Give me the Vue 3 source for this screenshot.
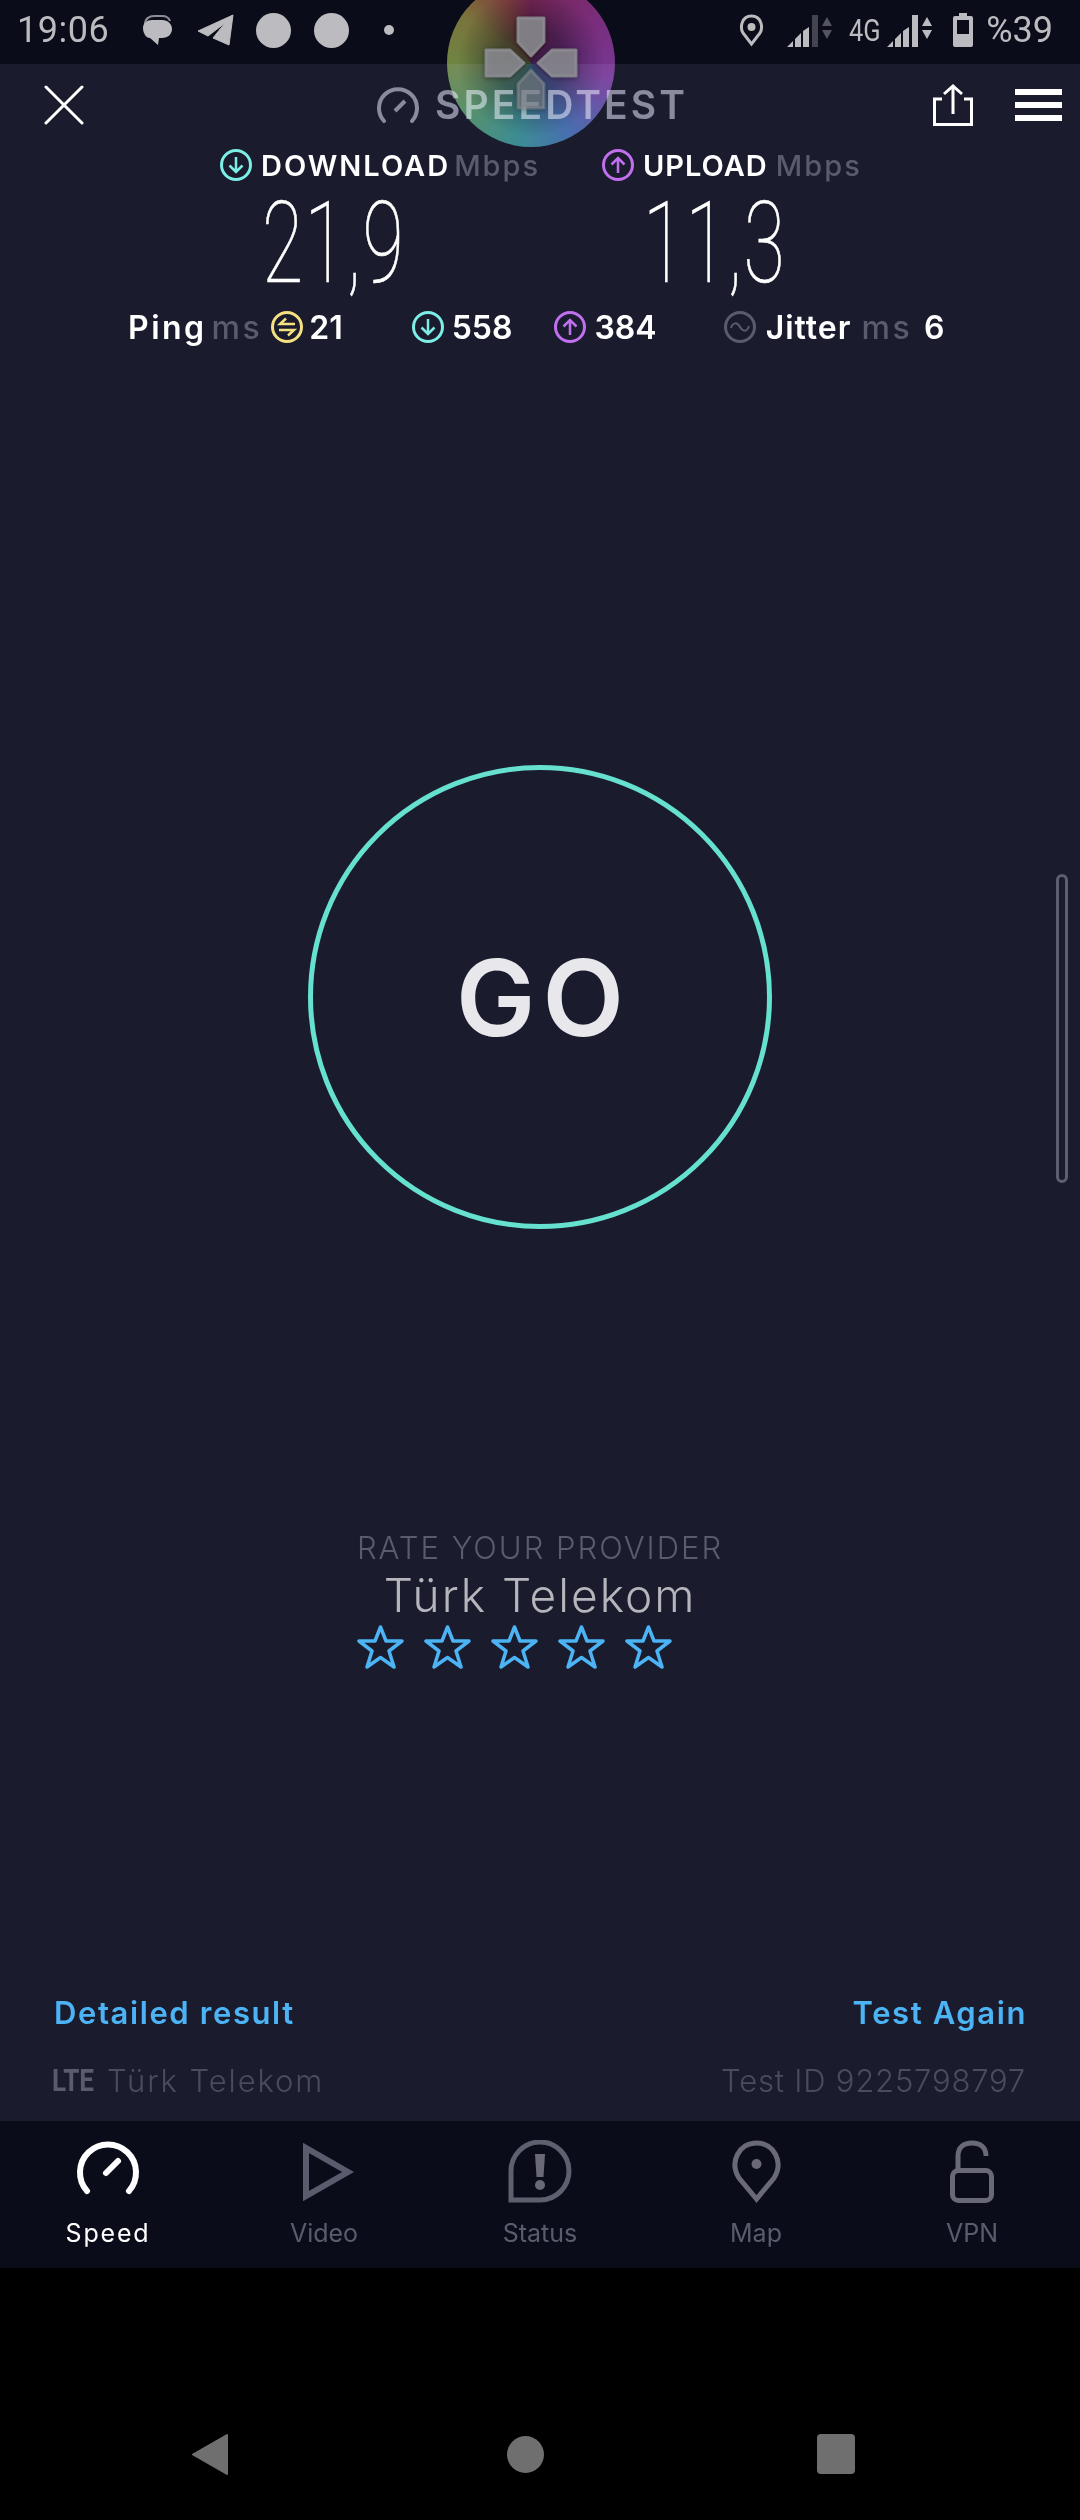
<script setup>
const stars = [1, 2, 3, 4, 5]
const tabs = [
  { key: 'speed', label: 'Speed', active: true },
  { key: 'video', label: 'Video' },
  { key: 'status', label: 'Status' },
  { key: 'map', label: 'Map' },
  { key: 'vpn', label: 'VPN' }
]
</script>

<template>
  <div class="phone">
    <header class="status-bar">
      <span class="clock">19:06</span>
      <svg class="st-bubble" width="32" height="31" viewBox="0 0 32 31">
        <path d="M4 9C4 4 8 1 13 1h8c4 0 7 2 8 5" fill="none" stroke="#8d8d93" stroke-width="2" />
        <path d="M2 13C2 8 6 5 11 5h10c6 0 10 4 10 9s-4 9-10 9h-3l-1 7-8-7C5 23 2 18 2 13z" fill="#bcbcc0" />
      </svg>
      <svg class="st-plane" width="37" height="32" viewBox="0 0 37 32">
        <path d="M36 1 32 31 16 24l12-15-17 13L1 17z" fill="#bcbcc0" stroke="#bcbcc0" stroke-width="1" stroke-linejoin="round" />
      </svg>
      <span class="st-circle first"></span>
      <span class="st-circle"></span>
      <span class="st-dot"></span>
      <div class="status-right">
        <svg width="25" height="33" viewBox="0 0 25 33">
          <path d="M12.5 30 4 19C1 14 2 2 12.5 2S24 14 21 19z" fill="none" stroke="#bcbcc0" stroke-width="3" />
          <circle cx="12.5" cy="13" r="4" fill="#bcbcc0" />
        </svg>
        <svg class="st-signal" width="45" height="33" viewBox="0 0 45 33">
          <path d="M0 33 6 27v6zM8 25l6-6v14H8zM16 17l6-4v20h-6z" fill="#bcbcc0" />
          <path d="M25 1h6v32h-6z" fill="#43444f" />
          <path d="M40 3l-5 9h10zM35 16l5 9 5-9z" fill="#53545e" />
        </svg>
        <span class="st-4g">4G</span>
        <svg class="st-signal-two" width="45" height="33" viewBox="0 0 45 33">
          <path d="M0 33 6 27v6zM8 25l6-6v14H8zM16 17l6-4v20h-6zM25 1h6v32h-6z" fill="#bcbcc0" />
          <path d="M40 3l-5 9h10zM35 16l5 9 5-9z" fill="#bcbcc0" />
        </svg>
        <svg class="st-battery" width="20" height="34" viewBox="0 0 20 34">
          <path fill-rule="evenodd" d="M6 0h8v3h4a2 2 0 0 1 2 2v27a2 2 0 0 1-2 2H2a2 2 0 0 1-2-2V5a2 2 0 0 1 2-2h4zM4 7v14h12V7z" fill="#bcbcc0" />
        </svg>
        <span class="battery-text">%39</span>
      </div>
    </header>

    <main class="app">
      <div class="top-bar">
        <svg class="close" width="40" height="40" viewBox="0 0 40 40">
          <path d="M2 2 38 38M38 2 2 38" stroke="#fff" stroke-width="3" stroke-linecap="round" />
        </svg>
        <div class="logo">
          <svg width="42" height="36" viewBox="0 0 42 36">
            <path d="M7 34A19 19 0 1 1 35 34" fill="none" stroke="#8a8b9e" stroke-width="4" stroke-linecap="round" />
            <path d="M18 24 28 14" stroke="#8a8b9e" stroke-width="4" />
          </svg>
          <span>SPEEDTEST</span>
        </div>
        <div class="top-actions">
          <svg width="40" height="42" viewBox="0 0 40 42">
            <path d="M9 15H1.500V40.500H38.500V15H31M20 30V2M11 10 20 2 29 10" fill="none" stroke="#fff" stroke-width="3" />
          </svg>
          <div class="menu"><i></i><i></i><i></i></div>
        </div>
      </div>

      <section class="speeds">
        <div class="speed-col">
          <div class="speed-head">
            <svg width="32" height="32" viewBox="0 0 32 32" class="dl">
              <circle cx="16" cy="16" r="14.500" fill="none" stroke="currentColor" stroke-width="3" />
              <path d="M16 8V23M9.500 16.500 16 23 22.500 16.500" fill="none" stroke="currentColor" stroke-width="2.500" />
            </svg>
            <b>DOWNLOAD</b><em>Mbps</em>
          </div>
          <div class="speed-value first">21,9</div>
        </div>
        <div class="speed-col">
          <div class="speed-head">
            <svg width="32" height="32" viewBox="0 0 32 32" class="ul">
              <circle cx="16" cy="16" r="14.500" fill="none" stroke="currentColor" stroke-width="3" />
              <path d="M16 24V9M9.500 15.500 16 9 22.500 15.500" fill="none" stroke="currentColor" stroke-width="2.500" />
            </svg>
            <b class="upload-label">UPLOAD</b><em class="upload-unit">Mbps</em>
          </div>
          <div class="speed-value">11,3</div>
        </div>
      </section>

      <section class="stats">
        <div class="stat ping">
          <b class="word">Ping</b><em>ms</em>
          <svg width="32" height="32" viewBox="0 0 32 32" class="yl">
            <circle cx="16" cy="16" r="14.500" fill="none" stroke="currentColor" stroke-width="3" />
            <path d="M24 13H9L15 7.500M8 19H23L17 24.500" fill="none" stroke="currentColor" stroke-width="2.500" />
          </svg>
          <b>21</b>
        </div>
        <div class="stat down">
          <svg width="32" height="32" viewBox="0 0 32 32" class="dl">
            <circle cx="16" cy="16" r="14.500" fill="none" stroke="currentColor" stroke-width="3" />
            <path d="M16 8V23M9.500 16.500 16 23 22.500 16.500" fill="none" stroke="currentColor" stroke-width="2.500" />
          </svg>
          <b>558</b>
        </div>
        <div class="stat up">
          <svg width="32" height="32" viewBox="0 0 32 32" class="ul">
            <circle cx="16" cy="16" r="14.500" fill="none" stroke="currentColor" stroke-width="3" />
            <path d="M16 24V9M9.500 15.500 16 9 22.500 15.500" fill="none" stroke="currentColor" stroke-width="2.500" />
          </svg>
          <b>384</b>
        </div>
        <div class="stat jitter">
          <svg width="32" height="32" viewBox="0 0 32 32" class="jt">
            <circle cx="16" cy="16" r="14.500" fill="none" stroke="currentColor" stroke-width="3" />
            <path d="M7 17C9 11 13 11 16 16S23 21 25 15" fill="none" stroke="currentColor" stroke-width="2" />
          </svg>
          <b class="word-tight">Jitter</b><em>ms</em><b class="jitter-num">6</b>
        </div>
      </section>

      <button class="go"><span>GO</span></button>

      <section class="rate">
        <div class="rate-label">RATE YOUR PROVIDER</div>
        <div class="rate-name">Türk Telekom</div>
        <div class="rate-stars">
          <svg v-for="s in stars" :key="s" width="47" height="44" viewBox="0 0 47 44">
            <path d="M23.500 2 29 16H45L32 26 37 42 23.500 32.500 10 42 15 26 2 16H18z" fill="none" stroke="#4cb4f5" stroke-width="3.500" stroke-linejoin="round" />
          </svg>
        </div>
      </section>

      <div class="links">
        <span>Detailed result</span>
        <span>Test Again</span>
      </div>
      <div class="meta">
        <div class="carrier"><span class="lte">LTE</span><span class="carrier-name">Türk Telekom</span></div>
        <span class="test-id">Test ID 9225798797</span>
      </div>

      <div class="scroll-thumb"></div>
    </main>

    <nav class="tabs">
      <div v-for="tab in tabs" :key="tab.key" class="tab" :class="{ active: tab.active }">
        <div class="tab-icon">
          <svg v-if="tab.key === 'speed'" width="64" height="56" viewBox="0 0 64 56">
            <path d="M11 51A28 28 0 1 1 53 51" fill="none" stroke="#fff" stroke-width="6" stroke-linecap="round" />
            <path d="M30 33 42 21" stroke="#fff" stroke-width="6" stroke-linecap="round" />
          </svg>
          <svg v-if="tab.key === 'video'" class="video-icon" width="52" height="60" viewBox="0 0 52 60">
            <path d="M3 6V54L45 30z" fill="none" stroke="#5a5c6e" stroke-width="6" />
          </svg>
          <svg v-if="tab.key === 'status'" width="64" height="63" viewBox="0 0 64 63">
            <path d="M3 60V32A29 29 0 1 1 32 60z" fill="none" stroke="#5e6070" stroke-width="5" />
            <path d="M27 14H37L35.500 37H28.500z" fill="#696a75" />
            <circle cx="32" cy="45" r="5" fill="#696a75" />
          </svg>
          <svg v-if="tab.key === 'map'" width="49" height="63" viewBox="0 0 49 63">
            <path d="M24.500 59 7 38C-3 22 7 3 24.500 3S52 22 42 38z" fill="none" stroke="#696a75" stroke-width="5" />
            <circle cx="24.500" cy="24" r="5" fill="#696a75" />
          </svg>
          <svg v-if="tab.key === 'vpn'" width="44" height="63" viewBox="0 0 44 63">
            <path d="M8 30V16C8 7 14 3 22 3S36 7 36 16" fill="none" stroke="#696a75" stroke-width="5" />
            <rect x="2.500" y="30.500" width="39" height="30" rx="6" fill="none" stroke="#696a75" stroke-width="5" />
          </svg>
        </div>
        <span class="tab-label">{{ tab.label }}</span>
      </div>
    </nav>

    <footer class="system-nav">
      <svg width="38" height="43" viewBox="0 0 38 43">
        <path d="M36 2 2 21.500 36 41z" fill="#6f6f6f" stroke="#6f6f6f" stroke-width="2" stroke-linejoin="round" />
      </svg>
      <span class="nav-home"></span>
      <span class="nav-recent"></span>
    </footer>

    <div class="float-ball"></div>
    <svg class="float-pad" width="96" height="96" viewBox="0 0 96 96">
      <g fill="#8c8c92" fill-opacity=".88" stroke="#8c8c92" stroke-opacity=".88" stroke-width="3" stroke-linejoin="round">
        <path d="M35 3H61V27L48 41 35 27z" />
        <path d="M35 93H61V69L48 55 35 69z" fill-opacity=".55" stroke-opacity=".55" />
        <path d="M3 35V61H27L41 48 27 35z" />
        <path d="M93 35V61H69L55 48 69 35z" />
      </g>
    </svg>
  </div>
</template>

<style scoped>
.phone {
  position: relative;
  width: 1080px;
  height: 2520px;
  overflow: hidden;
  display: flex;
  flex-direction: column;
  background: #000;
  font-family: Inter, "Open Sans", sans-serif;
}

.status-bar {
  height: 64px;
  flex: none;
  display: flex;
  align-items: center;
  padding: 0 27px 4px 17px;
  box-sizing: border-box;
  background: #0a0c19;
  color: #bcbcc0;
  font-family: Roboto, sans-serif;
}

.clock {
  font-size: 36px;
  width: 124px;
  letter-spacing: 0.5px;
}

.st-plane {
  margin-left: 24px;
}

.st-circle {
  width: 35px;
  height: 35px;
  border-radius: 50%;
  background: #bcbcc0;
  margin-left: 23px;
}

.st-circle.first {
  margin-left: 22px;
}

.st-dot {
  width: 10px;
  height: 10px;
  border-radius: 50%;
  background: #bcbcc0;
  margin-left: 35px;
}

.status-right {
  margin-left: auto;
  display: flex;
  align-items: center;
}

.st-signal {
  margin-left: 23px;
}

.st-4g {
  font-size: 31px;
  width: 34px;
  margin-left: 17px;
  transform: scaleX(0.82);
  transform-origin: left;
}

.st-signal-two {
  margin-left: 4px;
}

.st-battery {
  margin-left: 21px;
}

.battery-text {
  font-size: 36px;
  margin-left: 13px;
}

.app {
  position: relative;
  flex: 1;
  display: flex;
  flex-direction: column;
  background: #1a1c2e;
}

.top-bar {
  display: flex;
  align-items: center;
  height: 42px;
  margin-top: 20px;
  padding-left: 44px;
  padding-right: 18px;
}

.logo {
  display: flex;
  align-items: center;
  gap: 16px;
  margin-left: 293px;
  color: #8a8b9e;
  font-size: 39px;
  font-weight: 600;
  letter-spacing: 3.1px;
  line-height: 42px;
}

.top-actions {
  margin-left: auto;
  display: flex;
  align-items: center;
  gap: 42px;
}

.menu {
  width: 47px;
  display: flex;
  flex-direction: column;
  gap: 7px;
}

.menu i {
  display: block;
  height: 6px;
  background: #fff;
}

.speeds {
  display: grid;
  grid-template-columns: 382px 1fr;
  padding-left: 220px;
  margin-top: 21px;
}

.speed-head {
  display: flex;
  align-items: center;
  height: 36px;
  font-size: 29px;
}

.speed-head b {
  color: #fff;
  font-weight: 600;
  margin-left: 9px;
  letter-spacing: 2px;
}

.speed-head b.upload-label {
  letter-spacing: 1px;
}

.speed-head em {
  font-style: normal;
  font-weight: 500;
  color: #5a5c6e;
  margin-left: 4px;
  letter-spacing: 2px;
}

.speed-head em.upload-unit {
  margin-left: 8px;
}

.dl {
  color: #7ceee6;
}

.ul {
  color: #c070ee;
}

.yl {
  color: #f5e17f;
}

.jt {
  color: #5a5c6e;
}

.speed-value {
  margin-left: 41px;
  margin-top: 0;
  height: 120px;
  color: #fff;
  font-family: Roboto, sans-serif;
  font-size: 114px;
  font-weight: 100;
  line-height: 120px;
  white-space: nowrap;
  letter-spacing: 2px;
  -webkit-text-stroke: 0.7px #fff;
  transform: scaleX(0.66);
  transform-origin: left;
}

.speed-value.first {
  margin-left: 42px;
}

.stats {
  display: flex;
  align-items: center;
  height: 36px;
  margin-top: 6px;
  padding-left: 128px;
  font-size: 32px;
}

.stat {
  display: flex;
  align-items: center;
}

.stat b {
  color: #fff;
  font-weight: 600;
}

.stat em {
  font-style: normal;
  font-weight: 500;
  color: #5a5c6e;
  letter-spacing: 2.500px;
}

.stat b.word {
  letter-spacing: 2.500px;
}

.stat b.word-tight {
  letter-spacing: 1px;
}

.ping em {
  margin-left: 5px;
}

.ping svg {
  margin-left: 9px;
  margin-right: 6px;
}

.down {
  margin-left: 69px;
}

.up {
  margin-left: 42px;
}

.jitter {
  margin-left: 67px;
}

.down svg,
.up svg {
  margin-right: 8px;
}

.jitter svg {
  margin-right: 10px;
}

.jitter em {
  margin-left: 10px;
}

.jitter-num {
  margin-left: 12px;
}

.go {
  align-self: center;
  width: 464px;
  height: 464px;
  margin-top: 420px;
  padding: 0 0 0 7px;
  border: 5px solid #66e0cf;
  border-radius: 50%;
  background: transparent;
  color: #e8e8ec;
  font-family: inherit;
  font-size: 106px;
  font-weight: 600;
  letter-spacing: 7px;
}

.rate {
  margin-top: 300px;
  display: flex;
  flex-direction: column;
  align-items: center;
}

.rate-label {
  color: #5a5c6e;
  font-size: 31px;
  font-weight: 300;
  line-height: 38px;
  letter-spacing: 2px;
}

.rate-name {
  color: #b5b5bb;
  font-size: 46px;
  font-weight: 300;
  line-height: 56px;
  letter-spacing: 2px;
}

.rate-stars {
  display: flex;
  gap: 20px;
  margin-top: 2px;
  margin-left: -52px;
}

.links {
  display: flex;
  justify-content: space-between;
  padding: 0 53px 0 54px;
  margin-top: 324px;
  color: #4cb4f5;
  font-size: 31px;
  font-weight: 600;
  line-height: 40px;
  letter-spacing: 1.600px;
}

.meta {
  display: flex;
  justify-content: space-between;
  padding: 0 54px 0 52px;
  margin-top: 28px;
  color: #4a4c5e;
  font-size: 31px;
  font-weight: 300;
  line-height: 40px;
}

.carrier {
  display: flex;
  align-items: center;
}

.carrier-name {
  letter-spacing: 1.900px;
}

.test-id {
  letter-spacing: 0.800px;
}

.lte {
  width: 55px;
  color: #5a5c6e;
  font-family: Roboto, sans-serif;
  font-weight: 700;
  transform: scaleX(0.84);
  transform-origin: left;
}

.scroll-thumb {
  position: absolute;
  right: 12px;
  top: 810px;
  width: 6px;
  height: 303px;
  border: 3px solid #5e5f6e;
  border-radius: 6px;
}

.tabs {
  height: 147px;
  flex: none;
  display: grid;
  grid-template-columns: repeat(5, 1fr);
  background: #0a0c19;
}

.tab {
  display: flex;
  flex-direction: column;
  align-items: center;
  color: #5a5c6e;
  font-size: 25px;
  font-weight: 400;
}

.tab.active {
  color: #fff;
  letter-spacing: 1.800px;
}

.tab-icon {
  height: 63px;
  margin-top: 19px;
  display: flex;
  align-items: center;
}

.tab.active .tab-icon {
  align-items: flex-start;
}

.video-icon {
  margin-left: 9px;
}

.tab-label {
  margin-top: 14px;
  line-height: 32px;
}

.system-nav {
  height: 252px;
  flex: none;
  display: flex;
  align-items: center;
  background: #000;
  padding: 120px 0 0 191px;
  box-sizing: border-box;
}

.nav-home {
  width: 37px;
  height: 37px;
  margin-left: 278px;
  border-radius: 50%;
  background: #6f6f6f;
}

.nav-recent {
  width: 38px;
  height: 40px;
  margin-left: 273px;
  border-radius: 4px;
  background: #6f6f6f;
}

.float-ball {
  position: absolute;
  left: 447px;
  top: -21px;
  width: 168px;
  height: 168px;
  border-radius: 50%;
  mix-blend-mode: screen;
  background:
    radial-gradient(circle, rgba(0, 0, 0, 0.62) 0%, rgba(0, 0, 0, 0.55) 28%, rgba(0, 0, 0, 0.18) 62%, rgba(0, 0, 0, 0.18) 82%, rgba(0, 0, 0, 0.7) 100%),
    conic-gradient(#8c2050 0deg, #8e2b88 60deg, #8a38a8 100deg, #3f70c0 150deg, #2f9a98 190deg, #50a060 230deg, #809a38 270deg, #8e8430 305deg, #964830 335deg, #8c2050 360deg);
}

.float-pad {
  position: absolute;
  left: 483px;
  top: 15px;
  filter: drop-shadow(0 1px 2px rgba(0, 0, 0, 0.4));
}
</style>
